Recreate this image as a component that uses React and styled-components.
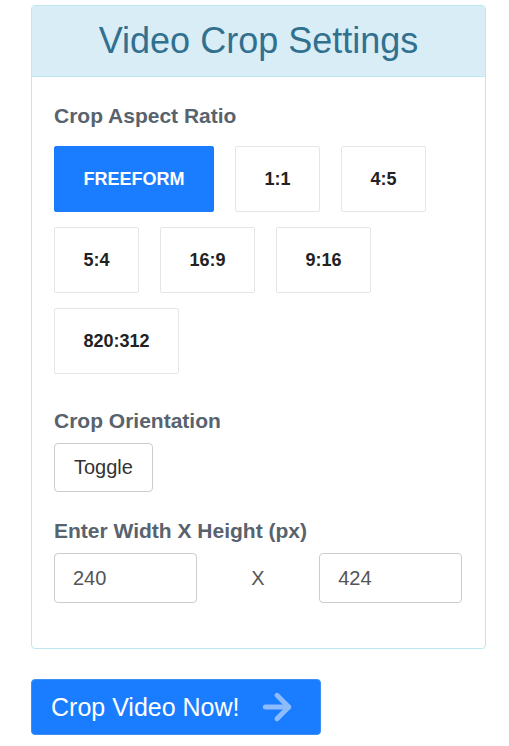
import React, { useState } from "react";
import styled, { createGlobalStyle } from "styled-components";
import { ArrowRight } from "lucide-react";

const GlobalStyle = createGlobalStyle`
  body {
    margin: 0;
    background: #fff;
    font-family: "Liberation Sans", Arial, sans-serif;
  }
`;

const Page = styled.div`
  padding: 5px 23px 11px 31px;
`;

const Card = styled.div`
  border: 1px solid #bce8f1;
  border-radius: 4px;
  margin-bottom: 30px;
`;

const Header = styled.div`
  background: #d9edf7;
  border-bottom: 1px solid #bce8f1;
  border-radius: 3px 3px 0 0;
  padding: 14px 15px 14px;
  text-align: center;
  color: #31708f;
  font-size: 36px;
  line-height: 42px;
`;

const Body = styled.div`
  padding: 27px 23px 45px 22px;
`;

const Label = styled.div`
  font-size: 21px;
  font-weight: bold;
  color: #58636d;
  line-height: 24px;
  margin-bottom: ${(props) => props.gap || 10}px;
`;

const RatioGrid = styled.div`
  display: flex;
  flex-wrap: wrap;
  column-gap: 21px;
  row-gap: 15px;
  margin-bottom: 35px;
`;

const RatioButton = styled.button`
  font-family: inherit;
  font-size: 18px;
  font-weight: bold;
  line-height: 20px;
  padding: 22px 28.5px;
  border: 1px solid ${(props) => (props.active ? "#1a7cff" : "#e6e6e6")};
  background: ${(props) => (props.active ? "#1a7cff" : "#fff")};
  color: ${(props) => (props.active ? "#fff" : "#222")};
  border-radius: 2px;
  cursor: pointer;
`;

const ToggleButton = styled.button`
  font-family: inherit;
  font-size: 20px;
  line-height: 23px;
  padding: 12px 19px;
  border: 1px solid #ccc;
  border-radius: 4px;
  background: #fff;
  color: #333;
  margin-bottom: 27px;
  cursor: pointer;
`;

const SizeRow = styled.div`
  display: grid;
  grid-template-columns: 35% 30% 35%;
  align-items: center;
`;

const SizeInput = styled.input`
  box-sizing: border-box;
  width: 100%;
  height: 50px;
  font-family: inherit;
  font-size: 20px;
  color: #555;
  padding: 0 18px;
  border: 1px solid #ccc;
  border-radius: 4px;
  outline: none;
`;

const Times = styled.span`
  text-align: center;
  font-size: 20px;
  color: #555;
`;

const SubmitButton = styled.button`
  display: inline-flex;
  align-items: center;
  gap: 17px;
  height: 56px;
  padding: 0 23px 0 19px;
  font-family: inherit;
  font-size: 25px;
  color: #fff;
  background: #1a7cff;
  border: 1px solid #3d8ff5;
  border-radius: 4px;
  cursor: pointer;
`;

const ratios = ["FREEFORM", "1:1", "4:5", "5:4", "16:9", "9:16", "820:312"];

export default function App() {
  const [ratio, setRatio] = useState("FREEFORM");
  const [width, setWidth] = useState("240");
  const [height, setHeight] = useState("424");

  return (
    <Page>
      <GlobalStyle />
      <Card>
        <Header>Video Crop Settings</Header>
        <Body>
          <Label gap={18}>Crop Aspect Ratio</Label>
          <RatioGrid>
            {ratios.map((r) => (
              <RatioButton key={r} active={r === ratio} onClick={() => setRatio(r)}>
                {r}
              </RatioButton>
            ))}
          </RatioGrid>

          <Label>Crop Orientation</Label>
          <ToggleButton
            onClick={() => {
              setWidth(height);
              setHeight(width);
            }}
          >
            Toggle
          </ToggleButton>

          <Label>Enter Width X Height (px)</Label>
          <SizeRow>
            <SizeInput value={width} onChange={(e) => setWidth(e.target.value)} />
            <Times>X</Times>
            <SizeInput value={height} onChange={(e) => setHeight(e.target.value)} />
          </SizeRow>
        </Body>
      </Card>

      <SubmitButton>
        Crop Video Now!
        <ArrowRight size={40} strokeWidth={3} color="#8cbcfb" />
      </SubmitButton>
    </Page>
  );
}
